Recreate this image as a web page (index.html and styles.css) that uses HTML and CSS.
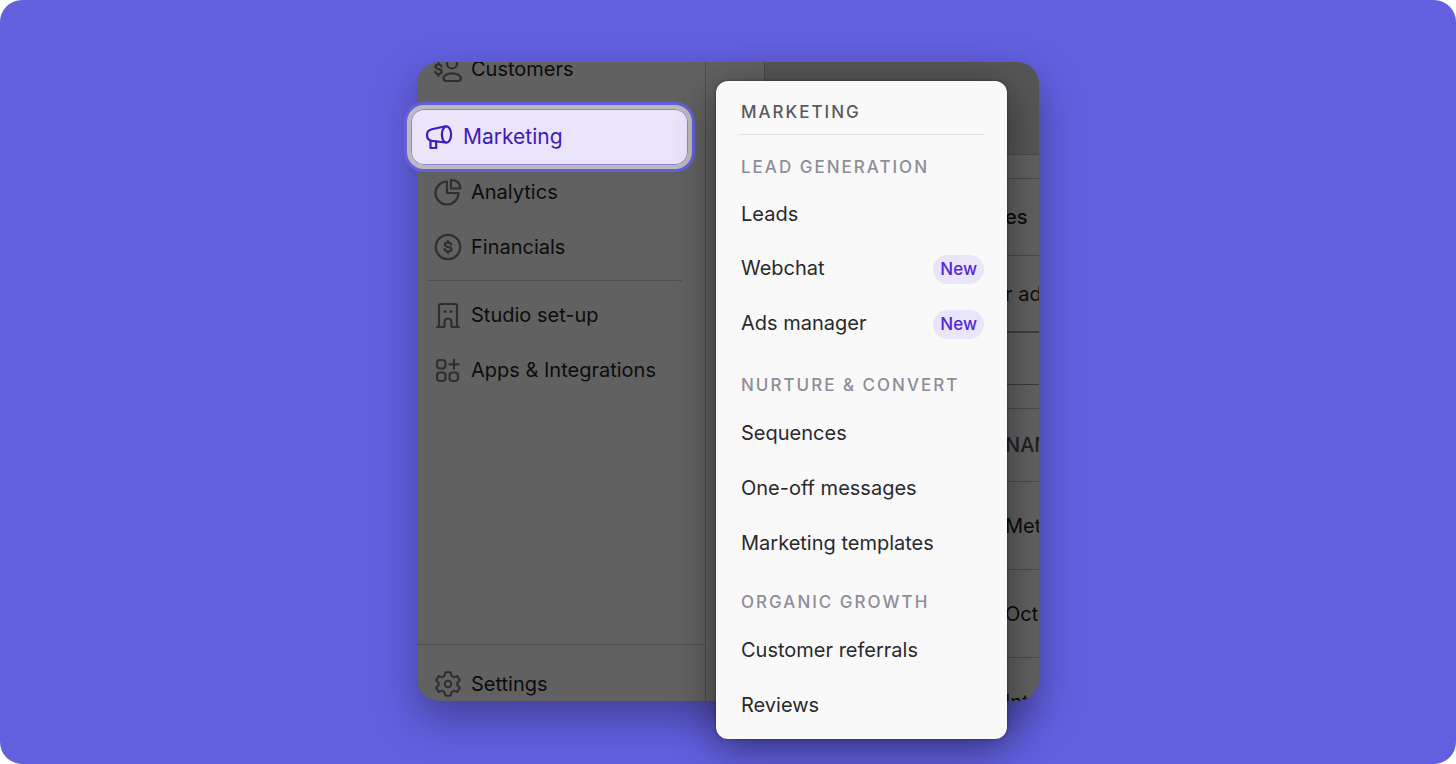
FILE: index.html
```html
<!DOCTYPE html>
<html lang="en">
<head>
<meta charset="utf-8">
<meta name="viewport" content="width=device-width, initial-scale=1">
<title>Marketing menu</title>
<link rel="stylesheet" href="styles.css">
</head>
<body>
<main class="stage">
  <div class="scene">
    <div class="window">
      <div class="sidebar">
        <nav class="nav" aria-label="Main">
          <a class="nav-item" href="#">
            <svg class="icon" viewBox="0 0 28 28"><circle cx="18" cy="8.500" r="5"/><path d="M13.500 26c-2.200 0-4-.600-4-2.600 0-3 3.800-5 8.700-5s8.700 2 8.700 5c0 2-1.800 2.600-4 2.600z"/><path d="M7.500 11.500C7 10 5.800 9.500 4.500 9.500c-1.700 0-3 .8-3 2.300 0 3.200 6.200 1.500 6.200 4.700 0 1.500-1.300 2.500-3.200 2.500-1.700 0-3-.8-3.300-2.200M4.500 7.500v2M4.500 19v2"/></svg>
            Customers
          </a>
          <a class="nav-item after-highlight" href="#">
            <svg class="icon" viewBox="0 0 28 28"><path d="M13 3.500a11.500 11.500 0 1 0 11.500 11.500H13z"/><path d="M17 2v8.500h9.300C26.300 5 22.800 2 17 2z"/></svg>
            Analytics
          </a>
          <a class="nav-item" href="#">
            <svg class="icon" viewBox="0 0 28 28"><circle cx="14" cy="14" r="12.200"/><path d="M17.300 11.700c-.4-1.300-1.600-2-3.300-2-1.900 0-3.200.8-3.200 2.100 0 3 6.600 1.400 6.600 4.400 0 1.400-1.400 2.200-3.400 2.200-1.900 0-3.200-.8-3.500-2.200M14 8v1.500M14 18.500V20"/></svg>
            Financials
          </a>
          <hr class="nav-rule">
          <a class="nav-item" href="#">
            <svg class="icon" viewBox="0 0 28 28"><path d="M3 26h7.500v-5a3.500 3.500 0 0 1 7 0v5H25M5 26V4.500C5 3.500 5.500 3 6.500 3h15c1 0 1.500.5 1.500 1.500V26"/><path d="M11 10.500v.2M17 10.500v.2" stroke-width="2.800"/></svg>
            Studio set-up
          </a>
          <a class="nav-item" href="#">
            <svg class="icon" viewBox="0 0 28 28"><rect x="3" y="4" width="8.500" height="8.500" rx="3"/><rect x="3" y="16.500" width="8.500" height="8.500" rx="3"/><rect x="15.500" y="16.500" width="8.500" height="8.500" rx="3"/><path d="M20 3.800v9M15.500 8.300h9"/></svg>
            Apps &amp; Integrations
          </a>
        </nav>
        <div class="sidebar-foot">
          <a class="nav-item" href="#">
            <svg class="icon" viewBox="-1 0 30 30"><path d="M11.200 2.500h5.600l1 3.700 2.700 1.500 3.700-1.100 2.500 4.300-2.600 2.600v3l2.600 2.600-2.500 4.300-3.700-1.100-2.700 1.500-1 3.700h-5.600l-1-3.700-2.700-1.500-3.700 1.100-2.500-4.300 2.600-2.600v-3l-2.600-2.600 2.500-4.300 3.700 1.100 2.700-1.500z"/><circle cx="14" cy="15" r="3.500"/></svg>
            Settings
          </a>
        </div>
      </div>
      <div class="gutter"></div>
      <div class="content">
        <div class="row row-head"></div>
        <div class="row row-gap"></div>
        <div class="row row-line row-strong">es</div>
        <div class="row row-line row-field">r ads</div>
        <div class="row row-input"></div>
        <div class="row row-gap"></div>
        <div class="row row-columns">NAME</div>
        <div class="row row-data">Meta</div>
        <div class="row row-data">Octo</div>
        <div class="row row-data">Inte</div>
      </div>
    </div>

    <a class="highlight" href="#" aria-current="page">
      <svg class="icon" viewBox="0 0 28 28"><path d="M20.500 3.300 6.800 6.300C3.800 7 2 9 2 12s1.800 5.300 4.800 5.800l14 1.700"/><ellipse cx="21.500" cy="11.500" rx="4.600" ry="8.200"/><path d="M5.500 17.800V25h5.700v-6.500"/></svg>
      Marketing
    </a>

    <nav class="menu" aria-labelledby="menu-title">
      <h2 class="menu-title" id="menu-title">MARKETING</h2>
      <section class="group">
        <h3 class="group-title">LEAD GENERATION</h3>
        <a class="menu-item compact" href="#">Leads</a>
        <a class="menu-item" href="#">Webchat <span class="badge">New</span></a>
        <a class="menu-item" href="#">Ads manager <span class="badge">New</span></a>
      </section>
      <section class="group spaced">
        <h3 class="group-title">NURTURE &amp; CONVERT</h3>
        <a class="menu-item" href="#">Sequences</a>
        <a class="menu-item" href="#">One-off messages</a>
        <a class="menu-item" href="#">Marketing templates</a>
      </section>
      <section class="group">
        <h3 class="group-title">ORGANIC GROWTH</h3>
        <a class="menu-item" href="#">Customer referrals</a>
        <a class="menu-item" href="#">Reviews</a>
      </section>
    </nav>
  </div>
</main>
</body>
</html>
```
FILE: styles.css
```css
* { box-sizing: border-box; }

body {
  margin: 0;
  background: #fff;
  font-family: Inter, "Liberation Sans", sans-serif;
  font-size: 20px;
  line-height: 28px;
}

a { color: inherit; text-decoration: none; }
h2, h3 { margin: 0; }

.stage {
  min-height: 100vh;
  padding: 62px 24px 24px;
  overflow: hidden;
  border-radius: 22px;
  background: #6360e0;
}

.scene {
  position: relative;
  max-width: 622px;
  margin: 0 auto;
}

.window {
  display: grid;
  grid-template-columns: 289px 59px 1fr;
  height: 639px;
  overflow: hidden;
  border-radius: 22px;
  background: #616161;
  color: #0c0c0d;
  box-shadow: 0 18px 40px rgba(20, 18, 50, 0.4);
}

.sidebar {
  display: flex;
  flex-direction: column;
  justify-content: space-between;
  min-height: 0;
  border-right: 1px solid #4d4d4d;
}

.nav { margin-top: -21px; }

.nav-item {
  display: flex;
  align-items: center;
  gap: 9px;
  height: 55px;
  padding-left: 17px;
}

.after-highlight { margin-top: 68px; }

.icon {
  flex: none;
  width: 28px;
  height: 28px;
  fill: none;
  stroke: #2e2e33;
  stroke-width: 2.200;
  stroke-linecap: round;
  stroke-linejoin: round;
}

.nav-rule {
  height: 1px;
  margin: 6px 23px 6px 10px;
  border: 0;
  background: #505050;
}

.sidebar-foot {
  height: 57px;
  padding-top: 11px;
  border-top: 1px solid #4d4d4d;
}

.gutter { border-right: 1px solid #484848; }

.content {
  min-width: 0;
  overflow: hidden;
}

.row {
  display: flex;
  align-items: center;
  padding-left: 240px;
  border-bottom: 1px solid #4a4a4a;
  white-space: nowrap;
}

.row-head { height: 93px; background: #565656; }
.row-gap { height: 24px; }
.row-line { height: 77px; }
.row-strong { font-weight: 500; }
.row-field { border-bottom: 2px solid #404040; }
.row-input { height: 52px; border-color: #383838; }
.row-columns { height: 73px; font-weight: 500; color: #202024; }
.row-data { height: 88px; }

.highlight {
  position: absolute;
  top: 43px;
  left: -10px;
  display: flex;
  align-items: center;
  gap: 10px;
  width: 285px;
  height: 64px;
  padding-left: 14px;
  border: 4px solid #bdbbb9;
  border-radius: 17px;
  background: #ebe5fc;
  color: #3f1bb8;
  font-size: 21px;
  box-shadow: 0 0 0 3px #6360e0, inset 0 0 0 1px #9181e6;
}

.highlight .icon { stroke: #3f1bb8; }

.menu {
  position: absolute;
  top: 19px;
  left: 299px;
  width: 291px;
  padding: 7px 23px;
  border-radius: 12px;
  background: #f9f9f9;
  color: #29292c;
  box-shadow: 0 0 3px rgba(0, 0, 0, 0.4), 0 10px 40px rgba(0, 0, 0, 0.45);
}

.menu-title, .group-title {
  padding-left: 2px;
  font-size: 17px;
  font-weight: 500;
  letter-spacing: 2px;
  color: #8f8d97;
}

.menu-title {
  padding-top: 10px;
  padding-bottom: 8px;
  border-bottom: 1px solid #e2e2e4;
  color: #5a5960;
}

.group { padding-top: 13px; }
.spaced { padding-top: 16px; }
.group-title { line-height: 39px; }

.menu-item {
  display: flex;
  align-items: center;
  justify-content: space-between;
  height: 55px;
  padding-left: 2px;
}

.compact { height: 53px; }

.badge {
  margin-top: 4px;
  padding: 0 7px;
  border-radius: 15px;
  background: #eae5fb;
  color: #5228d8;
  font-size: 17px;
  font-weight: 500;
  line-height: 29px;
}
```
